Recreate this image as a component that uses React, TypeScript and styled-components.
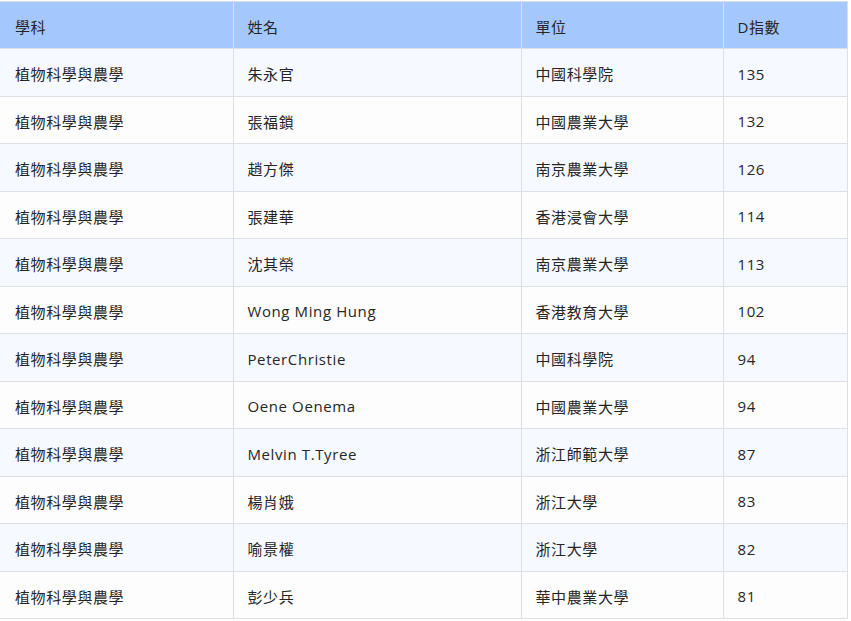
import React from "react";
import styled, { createGlobalStyle } from "styled-components";

const Global = createGlobalStyle`
  html, body { margin: 0; padding: 0; background: #ffffff; }
  body { font-family: "Open Sans", "Noto Sans CJK TC", sans-serif; }
`;

const Wrap = styled.div`
  padding-top: 1px;
  width: 847px;
`;

const Table = styled.table`
  width: 847px;
  border-collapse: collapse;
  table-layout: fixed;
  font-family: "Open Sans", "Noto Sans CJK TC", sans-serif;
  font-size: 15px;
  letter-spacing: 0.6px;
  color: #262626;
`;

const HeadCell = styled.th<{ $w: number }>`
  box-sizing: border-box;
  width: ${(p) => p.$w}px;
  height: 47px;
  padding: 3px 14px 0;
  text-align: left;
  font-weight: normal;
  background: #a4c7fd;
  border: 1px solid #dcdfe6;
  &:first-child { border-left: none; padding-left: 15px; }
`;

const Row = styled.tr<{ $odd: boolean }>`
  background: ${(p) => (p.$odd ? "#f6f9ff" : "#fdfdfd")};
`;

const Cell = styled.td`
  box-sizing: border-box;
  height: 47.5px;
  padding: 3px 14px 0;
  border: 1px solid #dcdfe6;
  white-space: nowrap;
  overflow: hidden;
  &:first-child { border-left: none; padding-left: 15px; }
`;

const cols = [
  { label: "學科", w: 233 },
  { label: "姓名", w: 288 },
  { label: "單位", w: 202 },
  { label: "D指數", w: 124 },
];

const data: [string, string, string, string][] = [
  ["植物科學與農學", "朱永官", "中國科學院", "135"],
  ["植物科學與農學", "張福鎖", "中國農業大學", "132"],
  ["植物科學與農學", "趙方傑", "南京農業大學", "126"],
  ["植物科學與農學", "張建華", "香港浸會大學", "114"],
  ["植物科學與農學", "沈其榮", "南京農業大學", "113"],
  ["植物科學與農學", "Wong Ming Hung", "香港教育大學", "102"],
  ["植物科學與農學", "PeterChristie", "中國科學院", "94"],
  ["植物科學與農學", "Oene Oenema", "中國農業大學", "94"],
  ["植物科學與農學", "Melvin T.Tyree", "浙江師範大學", "87"],
  ["植物科學與農學", "楊肖娥", "浙江大學", "83"],
  ["植物科學與農學", "喻景權", "浙江大學", "82"],
  ["植物科學與農學", "彭少兵", "華中農業大學", "81"],
];

export default function App() {
  return (
    <>
      <Global />
      <Wrap>
        <Table>
          <thead>
            <tr>
              {cols.map((c) => (
                <HeadCell key={c.label} $w={c.w}>
                  {c.label}
                </HeadCell>
              ))}
            </tr>
          </thead>
          <tbody>
            {data.map((r, i) => (
              <Row key={i} $odd={i % 2 === 0}>
                {r.map((v, j) => (
                  <Cell key={j}>{v}</Cell>
                ))}
              </Row>
            ))}
          </tbody>
        </Table>
      </Wrap>
    </>
  );
}
